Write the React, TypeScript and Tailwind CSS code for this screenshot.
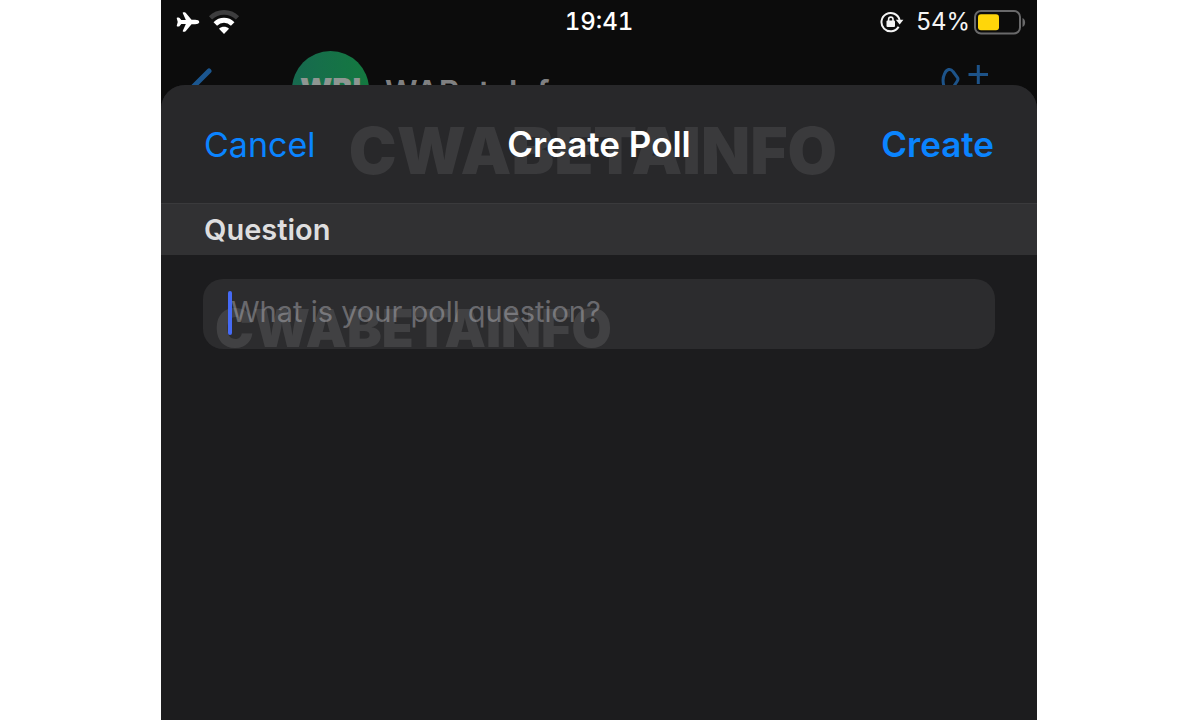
import React from 'react';
import { IoAirplane } from 'react-icons/io5';

const WifiIcon = () => (
  <svg width="32" height="24" viewBox="0 0 32 24" fill="none" aria-hidden="true">
    <path d="M2.500 7.800C10 0.500 22 0.500 29.500 7.800" stroke="#3d3d3e" strokeWidth="4.600" />
    <path d="M7.300 14C12.300 9 19.700 9 24.700 14" stroke="#fff" strokeWidth="5" />
    <path d="M16 24L11 18.800C13.800 16.200 18.200 16.200 21 18.800Z" fill="#fff" />
  </svg>
);

const RotationLockIcon = () => (
  <svg width="24" height="22" viewBox="0 0 24 22" fill="none" aria-hidden="true">
    <path d="M18.6 15.8A9.2 9.2 0 1 1 19.6 9" stroke="#f4f4f4" strokeWidth="2" />
    <path d="M15.800 8.800H23.400L19.700 13.600Z" fill="#f4f4f4" />
    <rect x="6.500" y="9.500" width="8.500" height="6.500" rx="1" fill="#f4f4f4" />
    <path d="M8.600 10V8.300A2.200 2.200 0 0 1 13 8.300V10" stroke="#f4f4f4" strokeWidth="1.600" />
  </svg>
);

const BatteryIcon = () => (
  <svg width="52" height="25" viewBox="0 0 52 25" fill="none" aria-hidden="true">
    <rect x="1" y="1" width="45" height="22.500" rx="6" stroke="#69696a" strokeWidth="2" />
    <rect x="4" y="4.200" width="21" height="16" rx="3" fill="#ffd60a" />
    <path d="M48.500 8C52 9.500 52 15.500 48.500 17Z" fill="#69696a" />
  </svg>
);

const VideoPlusIcon = () => (
  <svg width="48" height="40" viewBox="0 0 48 40" fill="none" stroke="#1d5389" strokeWidth="3" aria-hidden="true">
    <path d="M4 24C1.500 18 1.500 13 3.500 9C5.500 4 9.500 3 12 6.500L16.500 12.500C17.500 14 17 15 16 16.500L11 24" />
    <path d="M27.500 9.500H47M37.300 0V19" />
  </svg>
);

const StatusBar = () => (
  <div className="grid h-11 grid-cols-[1fr_auto_1fr] items-center px-[11px] text-[24px]">
    <div className="flex items-center gap-2 pl-1">
      <IoAirplane className="size-6 text-white" />
      <WifiIcon />
    </div>
    <time className="font-medium tabular-nums text-white">19:41</time>
    <div className="flex items-center justify-end">
      <RotationLockIcon />
      <span className="mx-3 mr-1 text-[#f4f4f4]">54%</span>
      <BatteryIcon />
    </div>
  </div>
);

const ChatHeader = () => (
  <div className="flex h-[41px] items-start overflow-hidden pl-[29px] pr-12">
    <svg className="mt-6 shrink-0" width="22" height="40" viewBox="0 0 22 40" fill="none" aria-hidden="true">
      <path d="M19 3L2 20L19 37" stroke="#1b568f" strokeWidth="5" strokeLinecap="round" />
    </svg>
    <div className="ml-20 mt-[7px] flex size-[77px] shrink-0 items-center justify-center rounded-full bg-linear-to-r from-[#17694f] to-[#14793f] text-[30px] font-black text-[#8f9692]">
      WBI
    </div>
    <span className="ml-4 mt-[31px] text-[32px] font-semibold leading-9 text-[#808081]">WABetaInfo</span>
    <div className="ml-auto mt-[21px]">
      <VideoPlusIcon />
    </div>
  </div>
);

const PollHeader = () => (
  <header className="relative grid h-[119px] grid-cols-[1fr_auto_1fr] items-center border-b border-[#3a3a3c] px-[43px] text-[35px]">
    <span className="pointer-events-none absolute inset-x-0 top-[34px] pr-3 text-center text-[64px] font-black leading-[64px] text-[#3a3a3c]">
      CWABETAINFO
    </span>
    <button type="button" className="relative justify-self-start text-[34px] text-[#0a84ff]">
      Cancel
    </button>
    <h1 className="relative font-semibold text-white">Create Poll</h1>
    <button type="button" className="relative justify-self-end font-semibold text-[#0a84ff]">
      Create
    </button>
  </header>
);

const QuestionField = () => (
  <div className="px-[42px] pt-6">
    <div className="relative h-[70px] overflow-hidden rounded-[20px] bg-[#2c2c2e]">
      <input
        id="question"
        type="text"
        placeholder="What is your poll question?"
        className="h-16 w-full bg-transparent pl-7 pr-6 text-[29px] text-white caret-[#4a6cf7] outline-none placeholder:text-[#69696d]"
      />
      <span className="pointer-events-none absolute left-3 top-6 text-[52px] font-black leading-[52px] text-white/10">
        CWABETAINFO
      </span>
      <span className="absolute left-[25px] top-3 h-11 w-1 rounded-sm bg-[#456af5]" />
    </div>
  </div>
);

const App = () => {
  return (
    <div className="min-h-screen bg-white font-['Inter','Liberation_Sans',sans-serif]">
      <div className="ml-[161px] mr-[163px] flex min-h-screen flex-col bg-[#0c0c0c]">
        <StatusBar />
        <ChatHeader />
        <main className="flex-1 overflow-hidden rounded-t-[24px] bg-[#1c1c1e]">
          <div className="bg-[#28282a]">
            <PollHeader />
          </div>
          <div className="flex h-[51px] items-center bg-[#313133] px-[43px]">
            <label htmlFor="question" className="text-[29px] font-semibold text-[#dededf]">
              Question
            </label>
          </div>
          <QuestionField />
        </main>
      </div>
    </div>
  );
};

export default App;
